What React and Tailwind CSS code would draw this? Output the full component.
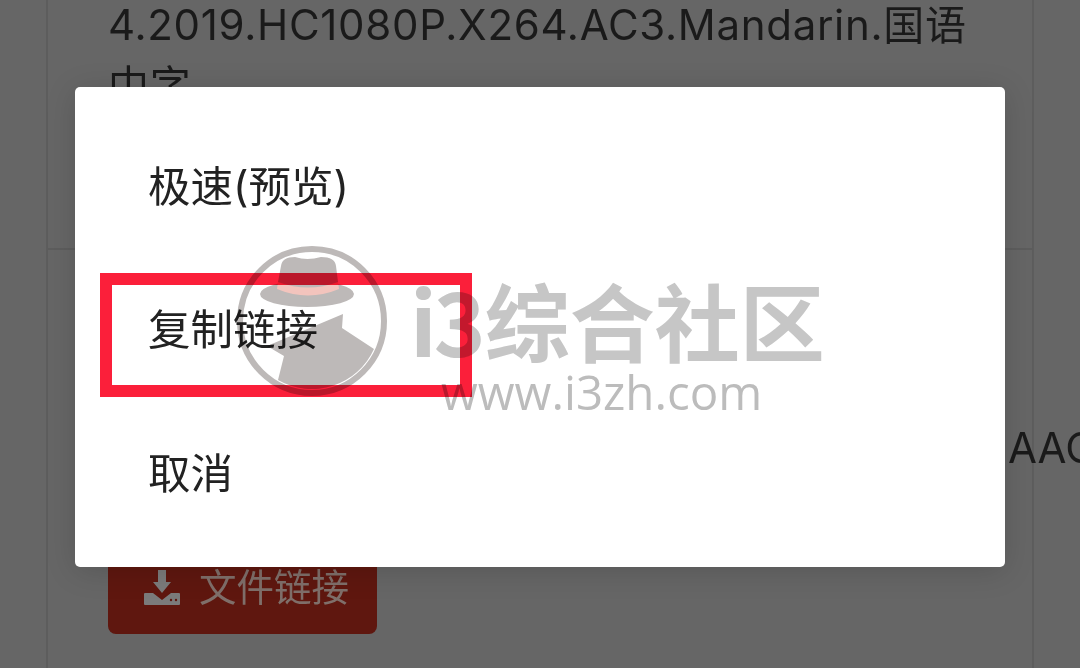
export default function App() {
  const menu = ['极速(预览)', '复制链接', '取消']

  return (
    <div className="relative h-[668px] w-[1080px] overflow-hidden bg-[#666666] font-['Inter','Noto_Sans_CJK_SC',sans-serif] text-[42px] leading-[60px] text-[#1a1a1a]">
      {/* page behind the dialog */}
      <div className="ml-[46px] mt-[-5px] h-[690px] w-[988px] border-x-2 border-[#5d5d5d]">
        <div className="h-[255px] border-b-2 border-[#5d5d5d] pl-[60px]">
          <p className="w-[870px] tracking-[0.7px]">
            4.2019.HC1080P.X264.AC3.Mandarin.<span className="text-[41px]">国语中字</span>
          </p>
        </div>
        <div className="pl-[60px] pt-[168px]">
          <p className="whitespace-nowrap pl-[900px]">AAC</p>
          <div className="mt-[63px] flex h-[93px] w-[269px] items-center gap-[19px] rounded-lg bg-[#5f170f] pl-[36px] text-[37.5px] text-[#7f6f6a]">
            <svg viewBox="0 0 36 36" className="h-9 w-9 fill-[#7b7b7b]">
              <path d="M14 0h8v12h5L18 23 9 12h5z" />
              <path d="M1 23h8l9 7 9-7h8a1 1 0 0 1 1 1v10a1 1 0 0 1-1 1H1a1 1 0 0 1-1-1V24a1 1 0 0 1 1-1z" />
              <circle cx="27" cy="30" r="1.200" fill="#5f170f" />
              <circle cx="32" cy="30" r="1.200" fill="#5f170f" />
            </svg>
            <span>文件链接</span>
          </div>
        </div>
      </div>

      {/* dialog */}
      <div className="absolute left-[75px] top-[87px] h-[480px] w-[930px] rounded-[5px] bg-white pt-[28px] text-[42.5px] text-[#222222] shadow-[0_4px_30px_rgba(0,0,0,0.15)]">
        {menu.map((item) => (
          <div key={item} className="flex h-[143.5px] items-center pl-[73px]">
            {item}
          </div>
        ))}
      </div>

      {/* red annotation box */}
      <div className="absolute left-[100px] top-[273px] h-[124px] w-[372px] border-[12px] border-[#fb1f3a]" />

      {/* watermark */}
      <svg viewBox="0 0 150 150" className="absolute left-[237px] top-[246px] h-[150px] w-[150px] mix-blend-multiply">
        <circle cx="75" cy="75" r="72" fill="none" stroke="#bdb9b8" strokeWidth="6" />
        <ellipse cx="70" cy="48" rx="47" ry="13" fill="#bdb9b8" />
        <path d="M41 35 Q71 46 101 35 L102 43 Q71 56 40 43z" fill="#f3c4bd" />
        <path d="M41 36 L44 20 Q45 11 58 11 Q70 15 84 11 Q98 11 99 20 L101 36 Q71 47 41 36z" fill="#bdb9b8" />
        <path d="M106 68 L105 82 L137 103 A68 68 0 0 1 41 134 L47 110 L30 100z" fill="#bdb9b8" />
      </svg>
      <div className="absolute left-[410px] top-[273px] flex items-center whitespace-nowrap font-['Noto_Sans_CJK_SC',sans-serif] text-[85px] font-bold leading-[92px] text-[#c6c6c6] mix-blend-multiply">
        <span className="mr-[2px] text-[88px] tracking-[-3px]">i3</span>
        <span>综合社区</span>
      </div>
      <div className="absolute left-[441px] top-[362px] whitespace-nowrap font-['Open_Sans',sans-serif] text-[47.5px] font-medium leading-[60px] text-[#bcbcbc] mix-blend-multiply">
        www.i3zh.com
      </div>
    </div>
  )
}
